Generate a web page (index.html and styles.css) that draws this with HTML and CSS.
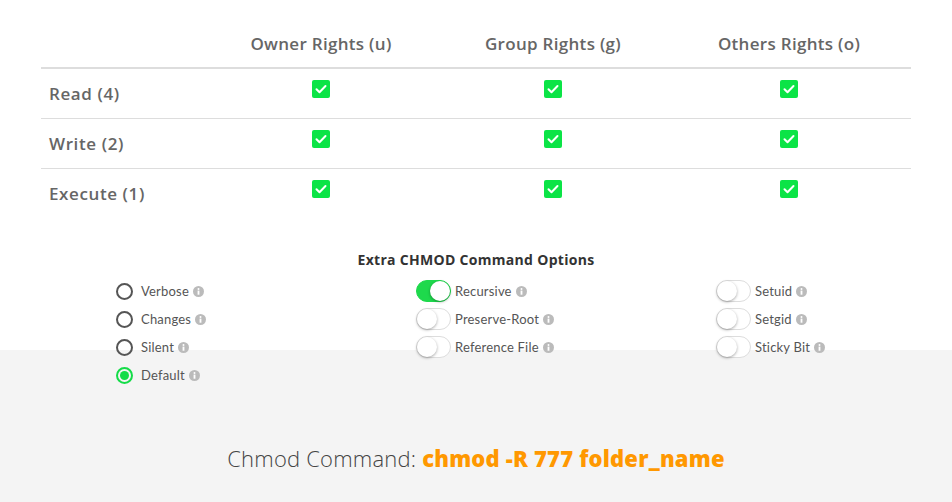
FILE: index.html
```html
<!DOCTYPE html>
<html lang="en">
<head>
    <meta charset="UTF-8">
    <meta name="viewport" content="width=device-width, initial-scale=1.0">
    <title>Chmod Calculator</title>
    <link rel="stylesheet" href="styles.css">
</head>
<body>
    <div class="calc-top">
        <table class="perm-table">
            <thead>
                <tr>
                    <th class="label-col"></th>
                    <th class="owner-col">Owner Rights (u)</th>
                    <th class="group-col">Group Rights (g)</th>
                    <th class="others-col">Others Rights (o)</th>
                </tr>
            </thead>
            <tbody>
                <tr>
                    <td class="row-label">Read (4)</td>
                    <td><span class="check"><svg viewBox="0 0 18 18"><rect width="18" height="18" rx="2"/><path d="M4.5 9.2l3 3 6-6.2"/></svg></span></td>
                    <td><span class="check"><svg viewBox="0 0 18 18"><rect width="18" height="18" rx="2"/><path d="M4.5 9.2l3 3 6-6.2"/></svg></span></td>
                    <td><span class="check"><svg viewBox="0 0 18 18"><rect width="18" height="18" rx="2"/><path d="M4.5 9.2l3 3 6-6.2"/></svg></span></td>
                </tr>
                <tr>
                    <td class="row-label">Write (2)</td>
                    <td><span class="check"><svg viewBox="0 0 18 18"><rect width="18" height="18" rx="2"/><path d="M4.5 9.2l3 3 6-6.2"/></svg></span></td>
                    <td><span class="check"><svg viewBox="0 0 18 18"><rect width="18" height="18" rx="2"/><path d="M4.5 9.2l3 3 6-6.2"/></svg></span></td>
                    <td><span class="check"><svg viewBox="0 0 18 18"><rect width="18" height="18" rx="2"/><path d="M4.5 9.2l3 3 6-6.2"/></svg></span></td>
                </tr>
                <tr>
                    <td class="row-label">Execute (1)</td>
                    <td><span class="check"><svg viewBox="0 0 18 18"><rect width="18" height="18" rx="2"/><path d="M4.5 9.2l3 3 6-6.2"/></svg></span></td>
                    <td><span class="check"><svg viewBox="0 0 18 18"><rect width="18" height="18" rx="2"/><path d="M4.5 9.2l3 3 6-6.2"/></svg></span></td>
                    <td><span class="check"><svg viewBox="0 0 18 18"><rect width="18" height="18" rx="2"/><path d="M4.5 9.2l3 3 6-6.2"/></svg></span></td>
                </tr>
            </tbody>
        </table>

        <h4 class="options-title">Extra CHMOD Command Options</h4>

        <div class="options-grid">
            <div class="option-col">
                <label class="option"><span class="radio"></span>Verbose <span class="info"><svg viewBox="0 0 12 12"><circle cx="6" cy="6" r="6"/><rect x="5" y="5" width="2" height="4.5"/><circle cx="6" cy="3.2" r="1.1"/></svg></span></label>
                <label class="option"><span class="radio"></span>Changes <span class="info"><svg viewBox="0 0 12 12"><circle cx="6" cy="6" r="6"/><rect x="5" y="5" width="2" height="4.5"/><circle cx="6" cy="3.2" r="1.1"/></svg></span></label>
                <label class="option"><span class="radio"></span>Silent <span class="info"><svg viewBox="0 0 12 12"><circle cx="6" cy="6" r="6"/><rect x="5" y="5" width="2" height="4.5"/><circle cx="6" cy="3.2" r="1.1"/></svg></span></label>
                <label class="option"><span class="radio on"></span>Default <span class="info"><svg viewBox="0 0 12 12"><circle cx="6" cy="6" r="6"/><rect x="5" y="5" width="2" height="4.5"/><circle cx="6" cy="3.2" r="1.1"/></svg></span></label>
            </div>
            <div class="option-col">
                <label class="option"><span class="toggle on"></span>Recursive <span class="info"><svg viewBox="0 0 12 12"><circle cx="6" cy="6" r="6"/><rect x="5" y="5" width="2" height="4.5"/><circle cx="6" cy="3.2" r="1.1"/></svg></span></label>
                <label class="option"><span class="toggle"></span>Preserve-Root <span class="info"><svg viewBox="0 0 12 12"><circle cx="6" cy="6" r="6"/><rect x="5" y="5" width="2" height="4.5"/><circle cx="6" cy="3.2" r="1.1"/></svg></span></label>
                <label class="option"><span class="toggle"></span>Reference File <span class="info"><svg viewBox="0 0 12 12"><circle cx="6" cy="6" r="6"/><rect x="5" y="5" width="2" height="4.5"/><circle cx="6" cy="3.2" r="1.1"/></svg></span></label>
            </div>
            <div class="option-col">
                <label class="option"><span class="toggle"></span>Setuid <span class="info"><svg viewBox="0 0 12 12"><circle cx="6" cy="6" r="6"/><rect x="5" y="5" width="2" height="4.5"/><circle cx="6" cy="3.2" r="1.1"/></svg></span></label>
                <label class="option"><span class="toggle"></span>Setgid <span class="info"><svg viewBox="0 0 12 12"><circle cx="6" cy="6" r="6"/><rect x="5" y="5" width="2" height="4.5"/><circle cx="6" cy="3.2" r="1.1"/></svg></span></label>
                <label class="option"><span class="toggle"></span>Sticky Bit <span class="info"><svg viewBox="0 0 12 12"><circle cx="6" cy="6" r="6"/><rect x="5" y="5" width="2" height="4.5"/><circle cx="6" cy="3.2" r="1.1"/></svg></span></label>
            </div>
        </div>
    </div>

    <div class="result">
        <p class="command">Chmod Command: <strong>chmod -R 777 folder_name</strong></p>
    </div>
</body>
</html>
```

FILE: styles.css
```css
* {
    margin: 0;
    padding: 0;
    box-sizing: border-box;
}

body {
    font-family: Lato, "Open Sans", sans-serif;
    background: #ffffff;
    color: #666666;
}

.calc-top {
    height: 350px;
    padding-top: 18px;
}

/* permissions table */
.perm-table {
    width: 870px;
    margin: 0 41px;
    border-collapse: collapse;
    table-layout: fixed;
    font-family: "Open Sans", sans-serif;
}

.perm-table th {
    height: 50px;
    padding-top: 1px;
    font-size: 17px;
    font-weight: 600;
    letter-spacing: 0.3px;
    color: #666666;
    border-bottom: 2px solid #dddddd;
}

.perm-table th.label-col {
    width: 162px;
}

.perm-table th.owner-col {
    width: 236px;
}

.perm-table th.group-col {
    width: 228px;
}

.perm-table td {
    height: 50px;
    text-align: center;
    vertical-align: top;
    padding-top: 11px;
}

.perm-table tbody tr + tr td {
    border-top: 1px solid #dddddd;
}

.perm-table td.row-label {
    text-align: left;
    vertical-align: middle;
    padding: 1px 0 0 8px;
    font-size: 17px;
    font-weight: 600;
    letter-spacing: 0.6px;
}

.check {
    display: inline-block;
    width: 18px;
    height: 18px;
}

.check svg {
    display: block;
    width: 18px;
    height: 18px;
}

.check rect {
    fill: #0be446;
}

.check path {
    fill: none;
    stroke: #ffffff;
    stroke-width: 2;
    stroke-linecap: round;
    stroke-linejoin: round;
}

/* options */
.options-title {
    margin-top: 32px;
    text-align: center;
    font-family: "Open Sans", sans-serif;
    font-size: 14px;
    font-weight: 700;
    letter-spacing: 0.3px;
    color: #333333;
    line-height: 20px;
}

.options-grid {
    display: grid;
    grid-template-columns: 300px 300px 1fr;
    padding-left: 116px;
    margin-top: 7px;
}

.option {
    display: flex;
    align-items: center;
    height: 28px;
    font-size: 13px;
    color: #555555;
    letter-spacing: 0.2px;
}

.radio {
    width: 17px;
    height: 17px;
    border: 2px solid #555555;
    border-radius: 50%;
    margin-right: 8px;
    display: flex;
    align-items: center;
    justify-content: center;
}

.radio.on {
    border-color: #14dc48;
}

.radio.on::after {
    content: "";
    width: 9px;
    height: 9px;
    border-radius: 50%;
    background: #14dc48;
}

.toggle {
    position: relative;
    width: 35px;
    height: 22px;
    border-radius: 11px;
    border: 1px solid #dddddd;
    background: #ffffff;
    margin-right: 4px;
}

.toggle::after {
    content: "";
    position: absolute;
    top: 0;
    left: 0;
    width: 20px;
    height: 20px;
    border-radius: 50%;
    background: #ffffff;
    box-shadow: 0 1px 3px rgba(0, 0, 0, 0.35);
}

.toggle.on {
    background: #1ed94c;
    border-color: #1ed94c;
}

.toggle.on::after {
    left: 13px;
}

.info {
    display: inline-block;
    width: 11px;
    height: 11px;
    margin-left: 4px;
}

.info svg {
    display: block;
    width: 11px;
    height: 11px;
}

.info circle:first-child {
    fill: #bbbbbb;
}

.info rect,
.info circle + rect + circle {
    fill: #ffffff;
}

/* result */
.result {
    background: #f4f4f4;
    height: 152px;
    padding-top: 93px;
}

.command {
    text-align: center;
    font-family: "Open Sans", sans-serif;
    font-size: 22px;
    font-weight: 300;
    letter-spacing: 0.2px;
    color: #444444;
}

.command strong {
    color: #ff9800;
    font-weight: 800;
}
```
